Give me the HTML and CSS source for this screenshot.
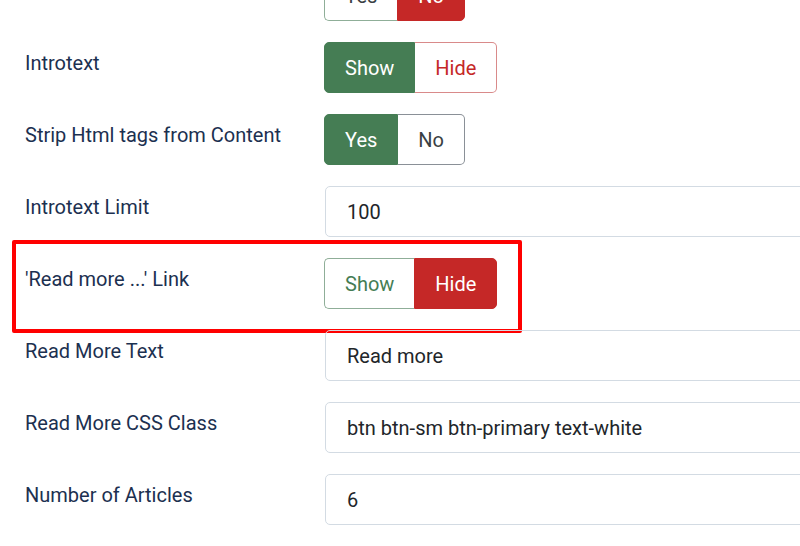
FILE: index.html
```html
<!DOCTYPE html>
<html>
<head>
<meta charset="utf-8">
<link rel="stylesheet" href="styles.css">
</head>
<body>
<div class="form">
  <div class="row">
    <div class="label"></div>
    <div class="control">
      <div class="toggle">
        <span class="opt off-neutral">Yes</span>
        <span class="opt on-red">No</span>
      </div>
    </div>
  </div>
  <div class="row">
    <div class="label">Introtext</div>
    <div class="control">
      <div class="toggle">
        <span class="opt on-green">Show</span>
        <span class="opt off-red">Hide</span>
      </div>
    </div>
  </div>
  <div class="row">
    <div class="label">Strip Html tags from Content</div>
    <div class="control">
      <div class="toggle">
        <span class="opt on-green">Yes</span>
        <span class="opt off-neutral">No</span>
      </div>
    </div>
  </div>
  <div class="row">
    <div class="label">Introtext Limit</div>
    <div class="control"><div class="input">100</div></div>
  </div>
  <div class="row highlighted">
    <div class="label">'Read more ...' Link</div>
    <div class="control">
      <div class="toggle">
        <span class="opt off-green">Show</span>
        <span class="opt on-red">Hide</span>
      </div>
    </div>
  </div>
  <div class="row">
    <div class="label">Read More Text</div>
    <div class="control"><div class="input">Read more</div></div>
  </div>
  <div class="row">
    <div class="label">Read More CSS Class</div>
    <div class="control"><div class="input">btn btn-sm btn-primary text-white</div></div>
  </div>
  <div class="row">
    <div class="label">Number of Articles</div>
    <div class="control"><div class="input">6</div></div>
  </div>
  <div class="row">
    <div class="label"></div>
    <div class="control"><div class="input"></div></div>
  </div>
</div>
</body>
</html>
```
FILE: styles.css
```css
html, body {
  margin: 0;
  padding: 0;
  background: #fff;
  overflow: hidden;
}
body {
  font-family: Roboto, "Noto Sans", sans-serif;
  font-size: 20px;
  width: 800px;
  height: 546px;
}
.form {
  margin-top: -30px;
  padding-left: 25px;
  display: flex;
  flex-direction: column;
  gap: 21px;
}
.row {
  display: grid;
  grid-template-columns: 299px 1fr;
  height: 51px;
  position: relative;
}
.label {
  color: #1c3050;
  line-height: 24px;
  padding-top: 9px;
}
.control {
  display: flex;
  align-items: stretch;
  min-width: 0;
}
.toggle {
  display: flex;
  height: 51px;
}
.opt {
  display: flex;
  align-items: center;
  justify-content: center;
  padding: 0 20px;
  box-sizing: border-box;
  border: 1px solid;
}
.opt:first-child {
  border-radius: 5px 0 0 5px;
}
.opt:last-child {
  border-radius: 0 5px 5px 0;
}
.on-green {
  background: #457d54;
  border-color: #457d54;
  color: #fff;
}
.on-red {
  background: #c52827;
  border-color: #c52827;
  color: #fff;
}
.off-red {
  background: #fff;
  border-color: #d98a8a;
  border-left: none;
  color: #c52827;
}
.off-green {
  background: #fff;
  border-color: #8fae98;
  border-right: none;
  color: #457d54;
}
.off-neutral {
  background: #fff;
  border-color: #8a9097;
  color: #3a3f44;
}
.on-green + .off-neutral { border-left: none; }
.off-neutral:first-child { border-right: none; border-color: #8fae98; }
.input {
  flex: 1;
  margin-left: 1px;
  margin-right: -10px;
  border: 1px solid #d3dbe3;
  border-radius: 5px;
  padding-left: 21px;
  display: flex;
  align-items: center;
  color: #22262a;
  box-sizing: border-box;
  height: 51px;
}
.highlighted::after {
  content: "";
  position: absolute;
  left: -13px;
  top: -18px;
  width: 502px;
  height: 85px;
  border: 4px solid #f00;
  border-radius: 2px;
  pointer-events: none;
}
```
